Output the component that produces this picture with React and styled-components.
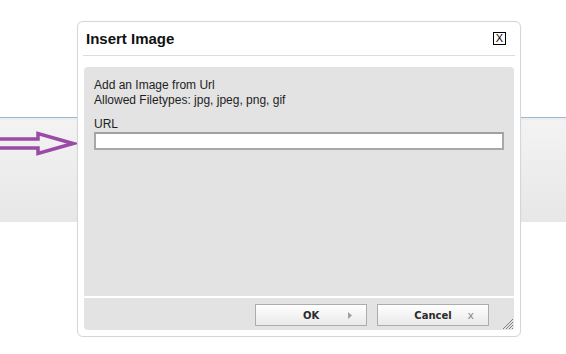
import React from "react";
import styled, { createGlobalStyle } from "styled-components";

const Global = createGlobalStyle`
  html, body { margin: 0; padding: 0; background: #fff; }
  body { font-family: "Liberation Sans", Arial, sans-serif; width: 566px; height: 354px; overflow: hidden; }
  #root { position: relative; width: 566px; height: 354px; }
`;

const Page = styled.div`
  position: relative;
  width: 566px;
  height: 354px;
  display: flex;
  flex-direction: column;
`;

const TopSpace = styled.div`
  height: 117px;
  flex: none;
`;

const Rule = styled.div`
  height: 1px;
  flex: none;
  background: #a3b6c6;
  border-bottom: 2px solid #e9eef2;
`;

const Band = styled.div`
  height: 102px;
  flex: none;
  background: linear-gradient(to bottom, #f3f3f3, #e7e7e7);
`;

const Arrow = styled.svg`
  position: absolute;
  left: 0;
  top: 131px;
`;

const Dialog = styled.div`
  position: absolute;
  left: 77px;
  top: 21px;
  width: 444px;
  height: 316px;
  box-sizing: border-box;
  background: #fff;
  border: 1px solid #d6d6d6;
  border-radius: 6px;
  box-shadow: 0 0 2px rgba(0, 0, 0, 0.06);
  display: flex;
  flex-direction: column;
  padding: 0 5px 5px 5px;
`;

const TitleBar = styled.div`
  height: 33px;
  border-bottom: 1px solid #dddddd;
  display: flex;
  align-items: center;
  justify-content: space-between;
  padding: 0 9px 0 3px;
  flex: none;
`;

const Title = styled.span`
  font-family: "Liberation Sans", Arial, sans-serif;
  font-weight: bold;
  font-size: 15px;
  color: #111;
`;

const CloseBox = styled.span`
  width: 11px;
  height: 11px;
  border: 1px solid #000;
  font-size: 11px;
  line-height: 11px;
  text-align: center;
  color: #000;
  font-family: "Liberation Sans", Arial, sans-serif;
`;

const Panel = styled.div`
  margin: 11px 1px 0 1px;
  background: #e3e3e3;
  border-radius: 4px 4px 0 0;
  height: 229px;
  flex: none;
  padding: 11px 10px 0 10px;
  box-sizing: border-box;
  font-size: 12px;
  line-height: 15px;
  color: #1e1e1e;
`;

const Line = styled.div`
  white-space: nowrap;
`;

const Label = styled.div`
  margin-top: 9px;
`;

const UrlInput = styled.input`
  display: block;
  box-sizing: border-box;
  width: 410px;
  height: 18px;
  margin: 0;
  padding: 0 3px;
  border: 2px solid #a8a8a8;
  border-top-color: #a0a0a0;
  background: #fff;
  outline: none;
`;

const ButtonBar = styled.div`
  position: relative;
  margin: 2px 1px 0 1px;
  background: #e3e3e3;
  border-radius: 0 0 4px 4px;
  height: 32px;
  flex: none;
  display: flex;
  justify-content: flex-end;
  align-items: flex-start;
  gap: 10px;
  padding: 6px 25px 0 0;
  box-sizing: border-box;
`;

const Button = styled.button`
  width: 112px;
  height: 22px;
  padding: 0 14px 0 0;
  margin: 0;
  border: 1px solid #acacac;
  background: linear-gradient(to bottom, #ffffff, #e9e9e9);
  display: grid;
  grid-template-columns: 1fr auto 1fr;
  align-items: center;
  font-family: "DejaVu Sans", Verdana, sans-serif;
  font-weight: bold;
  font-size: 10px;
  color: #2a2a2a;
  box-sizing: border-box;
`;

const ButtonText = styled.span`
  grid-column: 2;
  padding-left: 14px;
`;

const ButtonIcon = styled.span`
  grid-column: 3;
  justify-self: end;
  display: flex;
  align-items: center;
  color: #8a8a8a;
  font-weight: normal;
  font-size: 11px;
  font-family: "DejaVu Sans", Verdana, sans-serif;
`;

const Grip = styled.svg`
  position: absolute;
  right: 0;
  bottom: 0;
`;

export default function App() {
  return (
    <>
      <Global />
      <Page>
        <TopSpace />
        <Rule />
        <Band />
        <Arrow width="78" height="26" viewBox="0 0 78 26">
          <polygon
            points="-4,8 38,8 38,2.5 73,12.5 38,22.5 38,17 -4,17"
            fill="none"
            stroke="#9b4aa6"
            strokeWidth="3.5"
            strokeLinejoin="miter"
          />
        </Arrow>
        <Dialog>
          <TitleBar>
            <Title>Insert Image</Title>
            <CloseBox>X</CloseBox>
          </TitleBar>
          <Panel>
            <Line>Add an Image from Url</Line>
            <Line>Allowed Filetypes: jpg, jpeg, png, gif</Line>
            <Label>URL</Label>
            <UrlInput type="text" />
          </Panel>
          <ButtonBar>
            <Button>
              <ButtonText>OK</ButtonText>
              <ButtonIcon>
                <svg width="4" height="7" viewBox="0 0 4 7">
                  <polygon points="0,0 4,3.5 0,7" fill="#a0a0a0" />
                </svg>
              </ButtonIcon>
            </Button>
            <Button>
              <ButtonText>Cancel</ButtonText>
              <ButtonIcon>x</ButtonIcon>
            </Button>
            <Grip width="12" height="12" viewBox="0 0 12 12">
              <line x1="11" y1="1" x2="1" y2="11" stroke="#808080" strokeWidth="1" />
              <line x1="11" y1="4" x2="4" y2="11" stroke="#808080" strokeWidth="1" />
              <line x1="11" y1="7" x2="7" y2="11" stroke="#808080" strokeWidth="1" />
              <line x1="11" y1="10" x2="10" y2="11" stroke="#808080" strokeWidth="1" />
            </Grip>
          </ButtonBar>
        </Dialog>
      </Page>
    </>
  );
}
